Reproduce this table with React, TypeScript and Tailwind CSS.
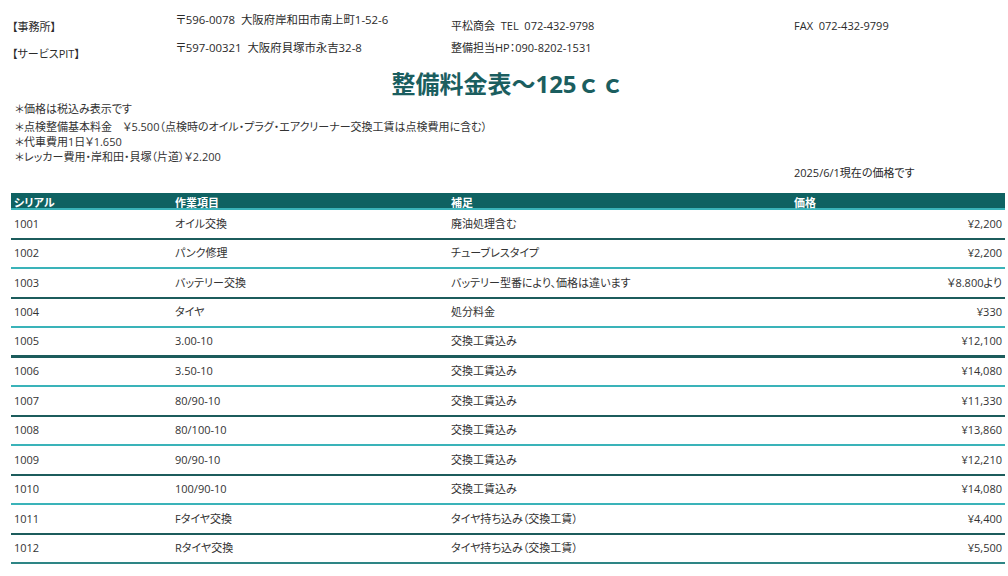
const rows = [
  { id: '1001', item: 'オイル交換', note: '廃油処理含む', price: '¥2,200', line: 'dark' },
  { id: '1002', item: 'パンク修理', note: 'チューブレスタイプ', price: '¥2,200', line: 'light' },
  { id: '1003', item: 'バッテリー交換', note: 'バッテリー型番により、価格は違います', price: '￥8.800より', line: 'dark' },
  { id: '1004', item: 'タイヤ', note: '処分料金', price: '¥330', line: 'light' },
  { id: '1005', item: '3.00-10', note: '交換工賃込み', price: '¥12,100', line: 'thick' },
  { id: '1006', item: '3.50-10', note: '交換工賃込み', price: '¥14,080', line: 'light' },
  { id: '1007', item: '80/90-10', note: '交換工賃込み', price: '¥11,330', line: 'dark' },
  { id: '1008', item: '80/100-10', note: '交換工賃込み', price: '¥13,860', line: 'light' },
  { id: '1009', item: '90/90-10', note: '交換工賃込み', price: '¥12,210', line: 'dark' },
  { id: '1010', item: '100/90-10', note: '交換工賃込み', price: '¥14,080', line: 'light' },
  { id: '1011', item: 'Fタイヤ交換', note: 'タイヤ持ち込み（交換工賃）', price: '¥4,400', line: 'dark' },
  { id: '1012', item: 'Rタイヤ交換', note: 'タイヤ持ち込み（交換工賃）', price: '¥5,500', line: 'mid' },
]

const lineClass: Record<string, string> = {
  dark: 'h-[29.5px] border-b-2 border-[#1c5c5c]',
  light: 'h-[29.5px] border-b-2 border-[#3ab3b9]',
  thick: 'h-[29.5px] border-b-[3px] border-[#1c5c5c]',
  mid: 'h-[29.5px] border-b-2 border-[#2e8585]',
}

const notes = [
  { text: '＊価格は税込み表示です', cls: '' },
  { text: '＊点検整備基本料金　￥5.500（点検時のオイル・プラグ・エアクリーナー交換工賃は点検費用に含む）', cls: 'mt-[3px]' },
  { text: '＊代車費用1日￥1.650', cls: '' },
  { text: '＊レッカー費用・岸和田・貝塚（片道）￥2.200', cls: '' },
]

export default function App() {
  return (
    <div className="min-h-[576px] bg-white font-['Open_Sans','Noto_Sans_CJK_JP',sans-serif] text-[11px] text-[#2a2a2a] [font-feature-settings:'palt']">
      <div className="ml-[11px] w-[994px]">
        {/* Header addresses */}
        <div className="grid h-[62px] grid-cols-[164px_276px_343px_1fr] leading-[16px]">
          <div className="flex flex-col pl-[1px] pt-[19px]">
            <span>【事務所】</span>
            <span className="mt-[11px]">【サービスPIT】</span>
          </div>
          <div className="flex flex-col pl-[1px] pt-[12px] text-[11.4px]">
            <span>〒596-0078&nbsp;&nbsp;大阪府岸和田市南上町1-52-6</span>
            <span className="mt-[12px]">〒597-00321&nbsp;&nbsp;大阪府貝塚市永吉32-8</span>
          </div>
          <div className="flex flex-col pt-[18px]">
            <span>平松商会&nbsp;&nbsp;TEL&nbsp;&nbsp;072-432-9798</span>
            <span className="mt-[6px]">整備担当HP：090-8202-1531</span>
          </div>
          <div className="flex flex-col pt-[18px]">
            <span>FAX&nbsp;&nbsp;072-432-9799</span>
          </div>
        </div>

        {/* Title */}
        <div className="h-[39px] pt-[6px] text-center">
          <h1 className="text-[24px] font-bold leading-[32px] text-[#1b5e5f] [font-feature-settings:normal]">
            整備料金表～125ｃｃ
          </h1>
        </div>

        {/* Notes */}
        <div className="pl-[4px] leading-[15px] text-[#333]">
          {notes.map((n) => (
            <p key={n.text} className={n.cls}>
              {n.text}
            </p>
          ))}
        </div>

        <div className="grid grid-cols-[783px_1fr] pt-[1px] leading-[15px]">
          <div />
          <p>2025/6/1現在の価格です</p>
        </div>

        {/* Table */}
        <div className="mt-[13px]">
          <div className="grid h-[17px] grid-cols-[164px_276px_343px_1fr] border-b-2 border-[#3ab3b9] bg-[#0f6262] font-bold leading-[15px] text-white">
            <div className="pl-[3px] pt-[2px]">シリアル</div>
            <div className="pt-[2px]">作業項目</div>
            <div className="pt-[2px]">補足</div>
            <div className="pt-[2px]">価格</div>
          </div>
          {rows.map((r) => (
            <div
              key={r.id}
              className={`grid grid-cols-[164px_276px_343px_1fr] items-center text-[#333] ${lineClass[r.line]}`}
            >
              <div className="pl-[3px]">{r.id}</div>
              <div>{r.item}</div>
              <div>{r.note}</div>
              <div className="pr-[3px] text-right">{r.price}</div>
            </div>
          ))}
        </div>
      </div>
    </div>
  )
}
